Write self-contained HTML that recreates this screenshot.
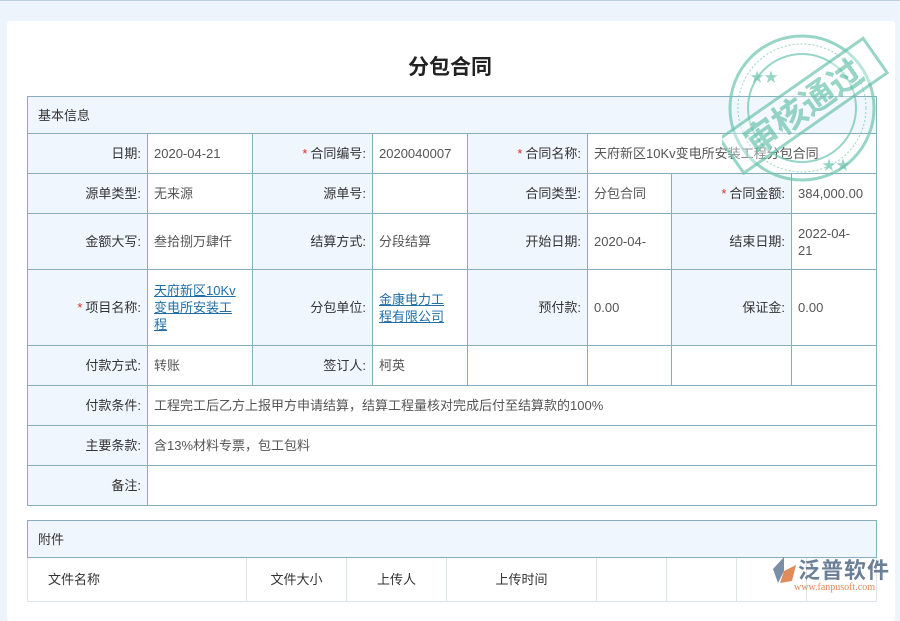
<!DOCTYPE html>
<html><head><meta charset="utf-8"><style>
*{box-sizing:border-box;margin:0;padding:0}
body{width:900px;height:600px;overflow:hidden;background:#eef4fb;font-family:"Liberation Sans","Noto Sans CJK SC",sans-serif;font-size:13px;color:#333;position:relative;border-top:1px solid #b8cfe0}
.card{position:absolute;left:7px;top:20px;width:888px;height:600px;background:#fff;border-radius:3px}
h1{position:absolute;left:0;top:50px;width:900px;text-align:center;font-size:21px;font-weight:bold;color:#222}
table{position:absolute;border-collapse:collapse;table-layout:fixed}
td{border:1px solid #86aebf;padding:0 6px;vertical-align:middle;line-height:17px}
td.l{background:#eff6fd;text-align:right;color:#333}
td.v{background:#fff;color:#555}
.s{color:#d9302c;margin-right:3px}
a{color:#1f6fa6;text-decoration:underline}
.hd{background:#f0f6fd;color:#333;padding-left:10px}
#t2 td{border-color:#dde3e8;color:#333}
#t2{border:1px solid #86aebf}
</style></head><body>
<div class="card"></div>
<h1>分包合同</h1>
<table style="left:27px;top:95px;width:849px">
<colgroup><col style="width:120px"><col style="width:105px"><col style="width:120px"><col style="width:95px"><col style="width:120px"><col style="width:84px"><col style="width:120px"><col style="width:85px"></colgroup>
<tr style="height:37px"><td colspan="8" class="hd">基本信息</td></tr>
<tr style="height:40px"><td class="l">日期:</td><td class="v">2020-04-21</td><td class="l"><span class="s">*</span>合同编号:</td><td class="v">2020040007</td><td class="l"><span class="s">*</span>合同名称:</td><td class="v" colspan="3">天府新区10Kv变电所安装工程分包合同</td></tr>
<tr style="height:40px"><td class="l">源单类型:</td><td class="v">无来源</td><td class="l">源单号:</td><td class="v"></td><td class="l">合同类型:</td><td class="v">分包合同</td><td class="l"><span class="s">*</span>合同金额:</td><td class="v">384,000.00</td></tr>
<tr style="height:56px"><td class="l">金额大写:</td><td class="v">叁拾捌万肆仟</td><td class="l">结算方式:</td><td class="v">分段结算</td><td class="l">开始日期:</td><td class="v">2020-04-</td><td class="l">结束日期:</td><td class="v">2022-04-<br>21</td></tr>
<tr style="height:76px"><td class="l"><span class="s">*</span>项目名称:</td><td class="v" style="padding-right:14px"><a>天府新区10Kv<br>变电所安装工<br>程</a></td><td class="l">分包单位:</td><td class="v"><a>金康电力工<br>程有限公司</a></td><td class="l">预付款:</td><td class="v">0.00</td><td class="l">保证金:</td><td class="v">0.00</td></tr>
<tr style="height:40px"><td class="l">付款方式:</td><td class="v">转账</td><td class="l">签订人:</td><td class="v">柯英</td><td class="v"></td><td class="v"></td><td class="v"></td><td class="v"></td></tr>
<tr style="height:40px"><td class="l">付款条件:</td><td class="v" colspan="7">工程完工后乙方上报甲方申请结算，结算工程量核对完成后付至结算款的100%</td></tr>
<tr style="height:40px"><td class="l">主要条款:</td><td class="v" colspan="7">含13%材料专票，包工包料</td></tr>
<tr style="height:40px"><td class="l">备注:</td><td class="v" colspan="7"></td></tr>
</table>
<table id="t2" style="left:27px;top:519px;width:849px">
<colgroup><col style="width:219px"><col style="width:100px"><col style="width:100px"><col style="width:150px"><col style="width:70px"><col style="width:70px"><col style="width:70px"><col style="width:70px"></colgroup>
<tr style="height:37px"><td colspan="8" class="hd" style="border-color:#86aebf">附件</td></tr>
<tr style="height:44px"><td style="padding-left:20px">文件名称</td><td style="text-align:center">文件大小</td><td style="text-align:center">上传人</td><td style="text-align:center">上传时间</td><td></td><td></td><td></td><td></td></tr>
</table>
<svg style="position:absolute;left:722px;top:19px" width="170" height="175" viewBox="0 0 170 175">
<g fill="none" stroke="#6cc4ae" opacity="0.7">
<circle cx="80" cy="88" r="72" stroke-width="3"/>
<circle cx="80" cy="88" r="64" stroke-width="1" stroke-dasharray="2 2"/>
<circle cx="80" cy="88" r="54" stroke-width="2"/>
</g>
<g transform="rotate(-35 80 88)" opacity="0.7">
<rect x="-5" y="66" width="175" height="42" fill="#fff" fill-opacity="0.5" stroke="#6cc4ae" stroke-width="3"/>
<text x="82" y="100" text-anchor="middle" font-size="34" font-weight="bold" fill="#6cc4ae" font-family="Liberation Sans,Noto Sans CJK SC,sans-serif">审核通过</text>
</g>
<text x="28" y="62" font-size="14" fill="#6cc4ae" opacity="0.7">★★</text>
<text x="100" y="150" font-size="14" fill="#6cc4ae" opacity="0.7">★★</text>
</svg>
<div style="position:absolute;left:770px;top:552px;width:125px;height:45px">
<svg width="28" height="30" style="position:absolute;left:0;top:2px"><path d="M14 2 L3 14 L8 28 L14 16 Z" fill="#7a8ea6"/><path d="M14 16 L26 10 L22 26 L10 28 Z" fill="#e08b5c"/></svg>
<div style="position:absolute;left:28px;top:0;font-size:22px;color:#6b7f96;font-weight:bold;letter-spacing:1px">泛普软件</div>
<div style="position:absolute;left:24px;top:29px;font-size:10px;color:#e08b5c;font-family:'Liberation Serif',serif">www.fanpusoft.com</div>
</div>
</body></html>
